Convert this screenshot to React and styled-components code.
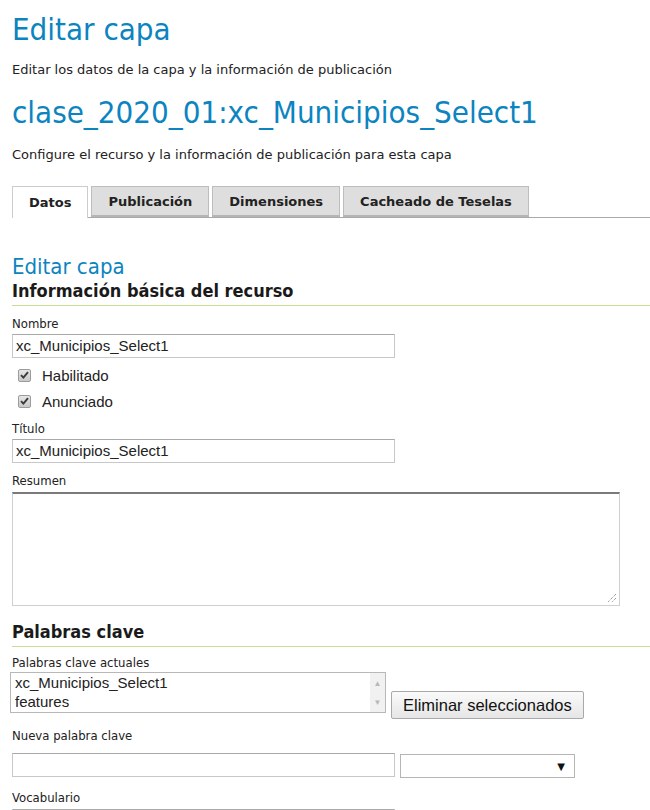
import React from 'react';
import styled, { createGlobalStyle } from 'styled-components';

const GlobalStyle = createGlobalStyle`
  body {
    margin: 0;
    background: #fff;
    font-family: "DejaVu Sans", sans-serif;
    color: #222;
  }
`;

const Page = styled.div`
  padding: 0 0 0 12px;
  width: 650px;
  box-sizing: border-box;
  overflow: hidden;
`;

const Title = styled.h1`
  margin: 0;
  padding-top: ${p => p.$top || 11}px;
  font-family: "DejaVu Sans Condensed", "DejaVu Sans", sans-serif;
  font-size: 31px;
  font-weight: normal;
  line-height: 36px;
  color: #0b84c0;
`;

const Lead = styled.p`
  margin: ${p => p.$gap || 15}px 0 0;
  font-size: 13px;
  line-height: 16px;
`;

const Tabs = styled.ul`
  display: flex;
  gap: 3px;
  margin: 23px 0 0;
  padding: 0;
  list-style: none;
  border-bottom: 1px solid #aaa;
  height: 31px;
`;

const Tab = styled.li`
  padding: 0 16px;
  box-sizing: border-box;
  display: flex;
  align-items: center;
  font-size: 13px;
  font-weight: bold;
  color: #222;
  border: 1px solid ${p => (p.$active ? '#ccc' : '#bdbdbd')};
  border-bottom: ${p => (p.$active ? 'none' : '2px solid #b5b5b5')};
  background: ${p => (p.$active ? '#fff' : '#dedede')};
  height: ${p => (p.$active ? '32px' : '31px')};
`;

const SectionTitle = styled.h2`
  margin: 36px 0 0;
  font-family: "DejaVu Sans Condensed", "DejaVu Sans", sans-serif;
  font-size: 22px;
  font-weight: normal;
  line-height: 26px;
  color: #0b84c0;
`;

const Legend = styled.h3`
  margin: ${p => p.$gap || 0}px 0 0;
  font-family: "DejaVu Sans Condensed", "DejaVu Sans", sans-serif;
  font-size: 18px;
  font-weight: bold;
  line-height: 22px;
  padding-bottom: 3px;
  border-bottom: 1px solid #c4de94;
  color: #1a1a1a;
`;

const Label = styled.label`
  display: block;
  font-family: "DejaVu Sans Condensed", "DejaVu Sans", sans-serif;
  font-size: 13px;
  line-height: 16px;
  margin-top: ${p => p.$gap || 8}px;
  color: #222;
`;

const TextInput = styled.div`
  width: ${p => p.$w || 383}px;
  height: 24px;
  box-sizing: border-box;
  margin-top: ${p => (p.$gap === undefined ? 2 : p.$gap)}px;
  border: 1px solid #c8c8c8;
  border-top-color: #a9a9a9;
  padding: 1px 3px;
  font-family: "Liberation Sans", Arial, sans-serif;
  font-size: 15px;
  line-height: 20px;
  color: #222;
`;

const Checks = styled.div`
  margin-top: 4px;
`;

const CheckRow = styled.div`
  display: flex;
  align-items: center;
  gap: 11px;
  height: 26px;
  padding-left: 6px;
  font-size: 15px;
  font-family: "Liberation Sans", Arial, sans-serif;
`;

const Box = styled.span`
  width: 11px;
  height: 11px;
  border: 1px solid #9c9c9c;
  border-radius: 2px;
  background: linear-gradient(#e6e6e6, #c9c9c9);
  display: flex;
  align-items: center;
  justify-content: center;
`;

const TextArea = styled.div`
  width: 608px;
  height: 114px;
  box-sizing: border-box;
  margin-top: 3px;
  border: 1px solid #cfcfcf;
  border-top: 2px solid #7a7a7a;
  position: relative;
`;

const Grip = styled.svg`
  position: absolute;
  right: 2px;
  bottom: 2px;
`;

const KeywordRow = styled.div`
  display: flex;
  align-items: flex-end;
  gap: 5px;
  margin-top: 1px;
`;

const ListBox = styled.div`
  width: 376px;
  height: 41px;
  box-sizing: border-box;
  border: 1px solid #b8b8b8;
  margin-left: -2px;
  display: flex;
  font-family: "Liberation Sans", Arial, sans-serif;
  font-size: 15px;
  line-height: 19px;
`;

const Options = styled.div`
  flex: 1;
  padding: 0 4px;
`;

const Scroll = styled.div`
  width: 15px;
  background: #f1f1f1;
  display: flex;
  flex-direction: column;
  justify-content: space-between;
  align-items: center;
  padding: 6px 0 5px;
  color: #b8b8b8;
  font-size: 8px;
  line-height: 9px;
`;

const Button = styled.button`
  height: 28px;
  margin-bottom: -6px;
  padding: 0 11px;
  border: 1px solid #a9a9a9;
  border-radius: 2px;
  background: linear-gradient(#fafafa, #e6e6e6);
  font-family: "Liberation Sans", Arial, sans-serif;
  font-size: 16.5px;
  color: #111;
`;

const InputRow = styled.div`
  display: flex;
  gap: 5px;
  margin-top: 9px;
`;

const Select = styled.div`
  width: 175px;
  height: 24px;
  box-sizing: border-box;
  margin-top: 1px;
  border: 1px solid #b5b5b5;
  display: flex;
  justify-content: flex-end;
  align-items: center;
  padding-right: 9px;
  font-size: 10px;
  color: #111;
`;

const CheckIcon = () => (
  <svg width="9" height="8" viewBox="0 0 9 8">
    <path d="M1 4.2 L3.4 6.6 L8 1.2" fill="none" stroke="#3a3a3a" strokeWidth="1.9" />
  </svg>
);

export default function App() {
  return (
    <Page>
      <GlobalStyle />
      <Title>Editar capa</Title>
      <Lead>Editar los datos de la capa y la información de publicación</Lead>
      <Title $top={16}>clase_2020_01:xc_Municipios_Select1</Title>
      <Lead $gap={17}>Configure el recurso y la información de publicación para esta capa</Lead>

      <Tabs>
        <Tab $active>Datos</Tab>
        <Tab>Publicación</Tab>
        <Tab>Dimensiones</Tab>
        <Tab>Cacheado de Teselas</Tab>
      </Tabs>

      <SectionTitle>Editar capa</SectionTitle>
      <Legend>Información básica del recurso</Legend>

      <Label $gap={10}>Nombre</Label>
      <TextInput>xc_Municipios_Select1</TextInput>
      <Checks>
        <CheckRow><Box><CheckIcon /></Box>Habilitado</CheckRow>
        <CheckRow><Box><CheckIcon /></Box>Anunciado</CheckRow>
      </Checks>
      <Label $gap={7}>Título</Label>
      <TextInput>xc_Municipios_Select1</TextInput>
      <Label $gap={10}>Resumen</Label>
      <TextArea>
        <Grip width="10" height="10" viewBox="0 0 10 10">
          <path d="M9 1 L1 9 M9 5 L5 9" stroke="#777" strokeWidth="1" strokeDasharray="1 1" />
        </Grip>
      </TextArea>

      <Legend $gap={15}>Palabras clave</Legend>
      <Label $gap={8}>Palabras clave actuales</Label>
      <KeywordRow>
        <ListBox>
          <Options>
            <div>xc_Municipios_Select1</div>
            <div>features</div>
          </Options>
          <Scroll><span>▲</span><span>▼</span></Scroll>
        </ListBox>
        <Button>Eliminar seleccionados</Button>
      </KeywordRow>
      <Label $gap={15}>Nueva palabra clave</Label>
      <InputRow>
        <TextInput $gap={0}></TextInput>
        <Select>▼</Select>
      </InputRow>
      <Label $gap={12}>Vocabulario</Label>
      <TextInput $gap={3}></TextInput>
    </Page>
  );
}
